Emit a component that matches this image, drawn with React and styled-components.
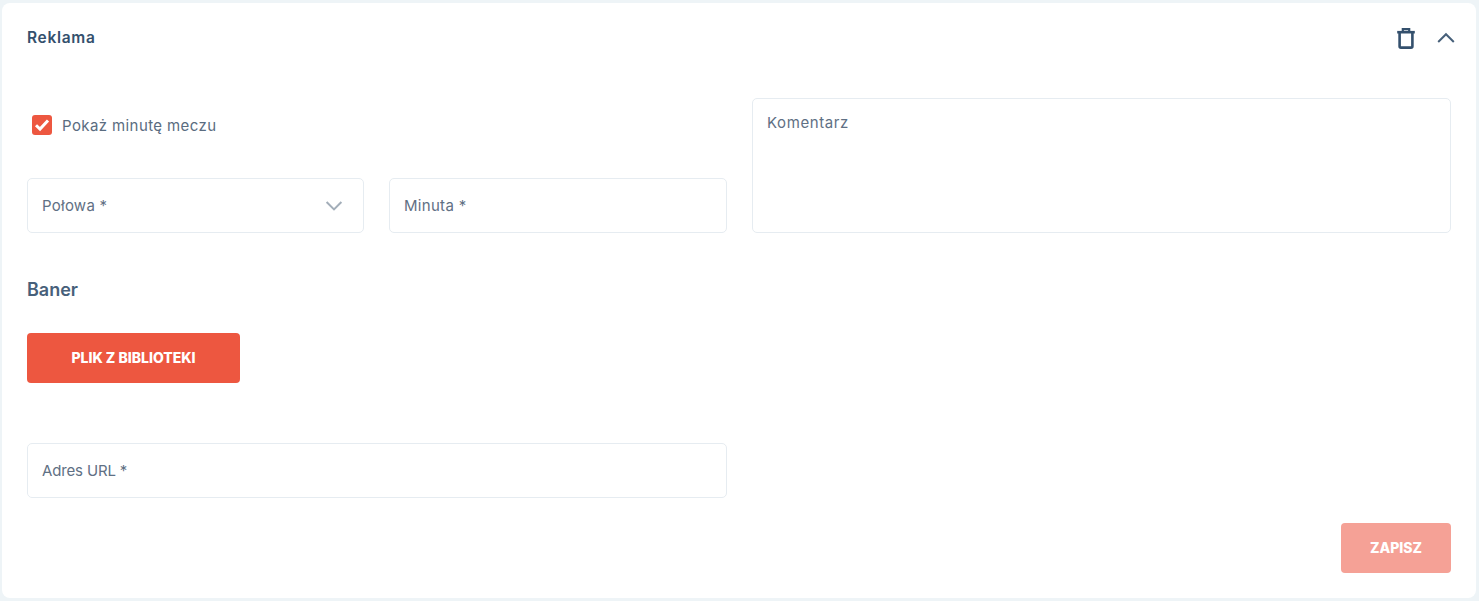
import React from "react";
import styled, { createGlobalStyle } from "styled-components";

const GlobalStyle = createGlobalStyle`
  html, body {
    margin: 0;
    height: 100%;
    background: #eef4f7;
  }
  body {
    font-family: "Inter", "Liberation Sans", sans-serif;
    color: #47596f;
  }
  * { box-sizing: border-box; }
`;

function TrashIcon() {
  return (
    <svg width="24" height="24" viewBox="0 0 24 24" fill="none" stroke="#34506d" strokeWidth="2.6">
      <path d="M3.2 6.2h17.6" />
      <path d="M8.8 6V3.2h6.4V6" strokeWidth="2.2" />
      <path d="M5.6 6.5v13.7c0 .9.5 1.4 1.4 1.4h10c.9 0 1.4-.5 1.4-1.4V6.5" />
    </svg>
  );
}

function Chevron({ up, color, size = 18 }) {
  return (
    <svg width={size} height={size} viewBox="0 0 18 18" fill="none" stroke={color} strokeWidth="2">
      <path d={up ? "M1.2 13 9 5.2l7.8 7.8" : "M1.6 5l7.4 7.4L16.4 5"} />
    </svg>
  );
}

export default function App() {
  return (
    <>
      <GlobalStyle />
      <Card>
        <Header>
          <Title>Reklama</Title>
          <Actions>
            <TrashIcon />
            <Chevron up color="#47607a" />
          </Actions>
        </Header>
        <Columns>
          <LeftColumn>
            <CheckRow>
              <CheckBox>
                <svg width="16" height="16" viewBox="0 0 16 16" fill="none" stroke="#fff" strokeWidth="3">
                  <path d="M2 8.2l4 3.9 8-8.6" />
                </svg>
              </CheckBox>
              <CheckLabel>Pokaż minutę meczu</CheckLabel>
            </CheckRow>
            <FieldRow>
              <SelectBox>
                <span>Połowa *</span>
                <Chevron color="#a3aeb9" />
              </SelectBox>
              <Input placeholder="Minuta *" />
            </FieldRow>
          </LeftColumn>
          <TextArea placeholder="Komentarz" />
        </Columns>
        <SectionTitle>Baner</SectionTitle>
        <LibraryButton>PLIK Z BIBLIOTEKI</LibraryButton>
        <UrlRow>
          <Input $spacing="-0.15px" placeholder="Adres URL *" />
        </UrlRow>
        <Footer>
          <SaveButton disabled>ZAPISZ</SaveButton>
        </Footer>
      </Card>
    </>
  );
}

const Card = styled.div`
  margin: 3px 3px 0 2px;
  height: 595px;
  padding: 0 25px;
  background: #fff;
  border-radius: 8px;
`;

const Header = styled.div`
  display: flex;
  align-items: center;
  justify-content: space-between;
  height: 70px;
`;

const Title = styled.div`
  margin-top: -2px;
  font-size: 15.5px;
  font-weight: 600;
  letter-spacing: 0.7px;
  color: #34506d;
`;

const Actions = styled.div`
  display: flex;
  align-items: center;
  gap: 19px;
  margin-right: -4px;
`;

const Columns = styled.div`
  display: grid;
  grid-template-columns: 700px 699px;
  gap: 25px;
  margin-top: 25px;
`;

const LeftColumn = styled.div`
  display: flex;
  flex-direction: column;
  justify-content: space-between;
`;

const CheckRow = styled.label`
  display: flex;
  align-items: center;
  gap: 10px;
  padding: 17px 0 0 5px;
`;

const CheckBox = styled.span`
  display: flex;
  align-items: center;
  justify-content: center;
  width: 20px;
  height: 20px;
  background: #ed5740;
  border-radius: 3px;
`;

const CheckLabel = styled.span`
  font-size: 15px;
  letter-spacing: 0.4px;
  color: #5a6c80;
`;

const SelectBox = styled.div`
  display: flex;
  align-items: center;
  justify-content: space-between;
  height: 55px;
  padding: 0 20px 0 14px;
  font-size: 15px;
  letter-spacing: 0.25px;
  color: #5f7084;
  border: 1px solid #e6ecf1;
  border-radius: 5px;
`;

const FieldRow = styled.div`
  display: grid;
  grid-template-columns: 337px 338px;
  gap: 25px;
`;

const Input = styled.input`
  width: 100%;
  height: 55px;
  padding: 0 14px;
  font: inherit;
  font-size: 15px;
  letter-spacing: ${(p) => p.$spacing || "0.3px"};
  border: 1px solid #e6ecf1;
  border-radius: 5px;
  outline: none;
  &::placeholder {
    color: #5f7084;
    opacity: 1;
  }
`;

const TextArea = styled.textarea`
  height: 135px;
  padding: 14px 14px;
  font: inherit;
  font-size: 15px;
  letter-spacing: 0.6px;
  border: 1px solid #e6ecf1;
  border-radius: 5px;
  outline: none;
  resize: none;
  &::placeholder {
    color: #5f7084;
    opacity: 1;
  }
`;

const SectionTitle = styled.h3`
  margin: 45px 0 0;
  font-size: 18px;
  line-height: 24px;
  font-weight: 600;
  color: #47607a;
`;

const LibraryButton = styled.button`
  display: block;
  width: 213px;
  height: 50px;
  margin-top: 31px;
  padding: 0 0 2px;
  font-family: inherit;
  font-size: 14px;
  font-weight: 800;
  color: #fff;
  background: #ed5740;
  border: 0;
  border-radius: 4px;
`;

const UrlRow = styled.div`
  width: 700px;
  margin-top: 60px;
`;

const Footer = styled.div`
  display: flex;
  justify-content: flex-end;
  margin-top: 25px;
`;

const SaveButton = styled(LibraryButton)`
  width: 110px;
  margin-top: 0;
  background: #f5a196;
`;
